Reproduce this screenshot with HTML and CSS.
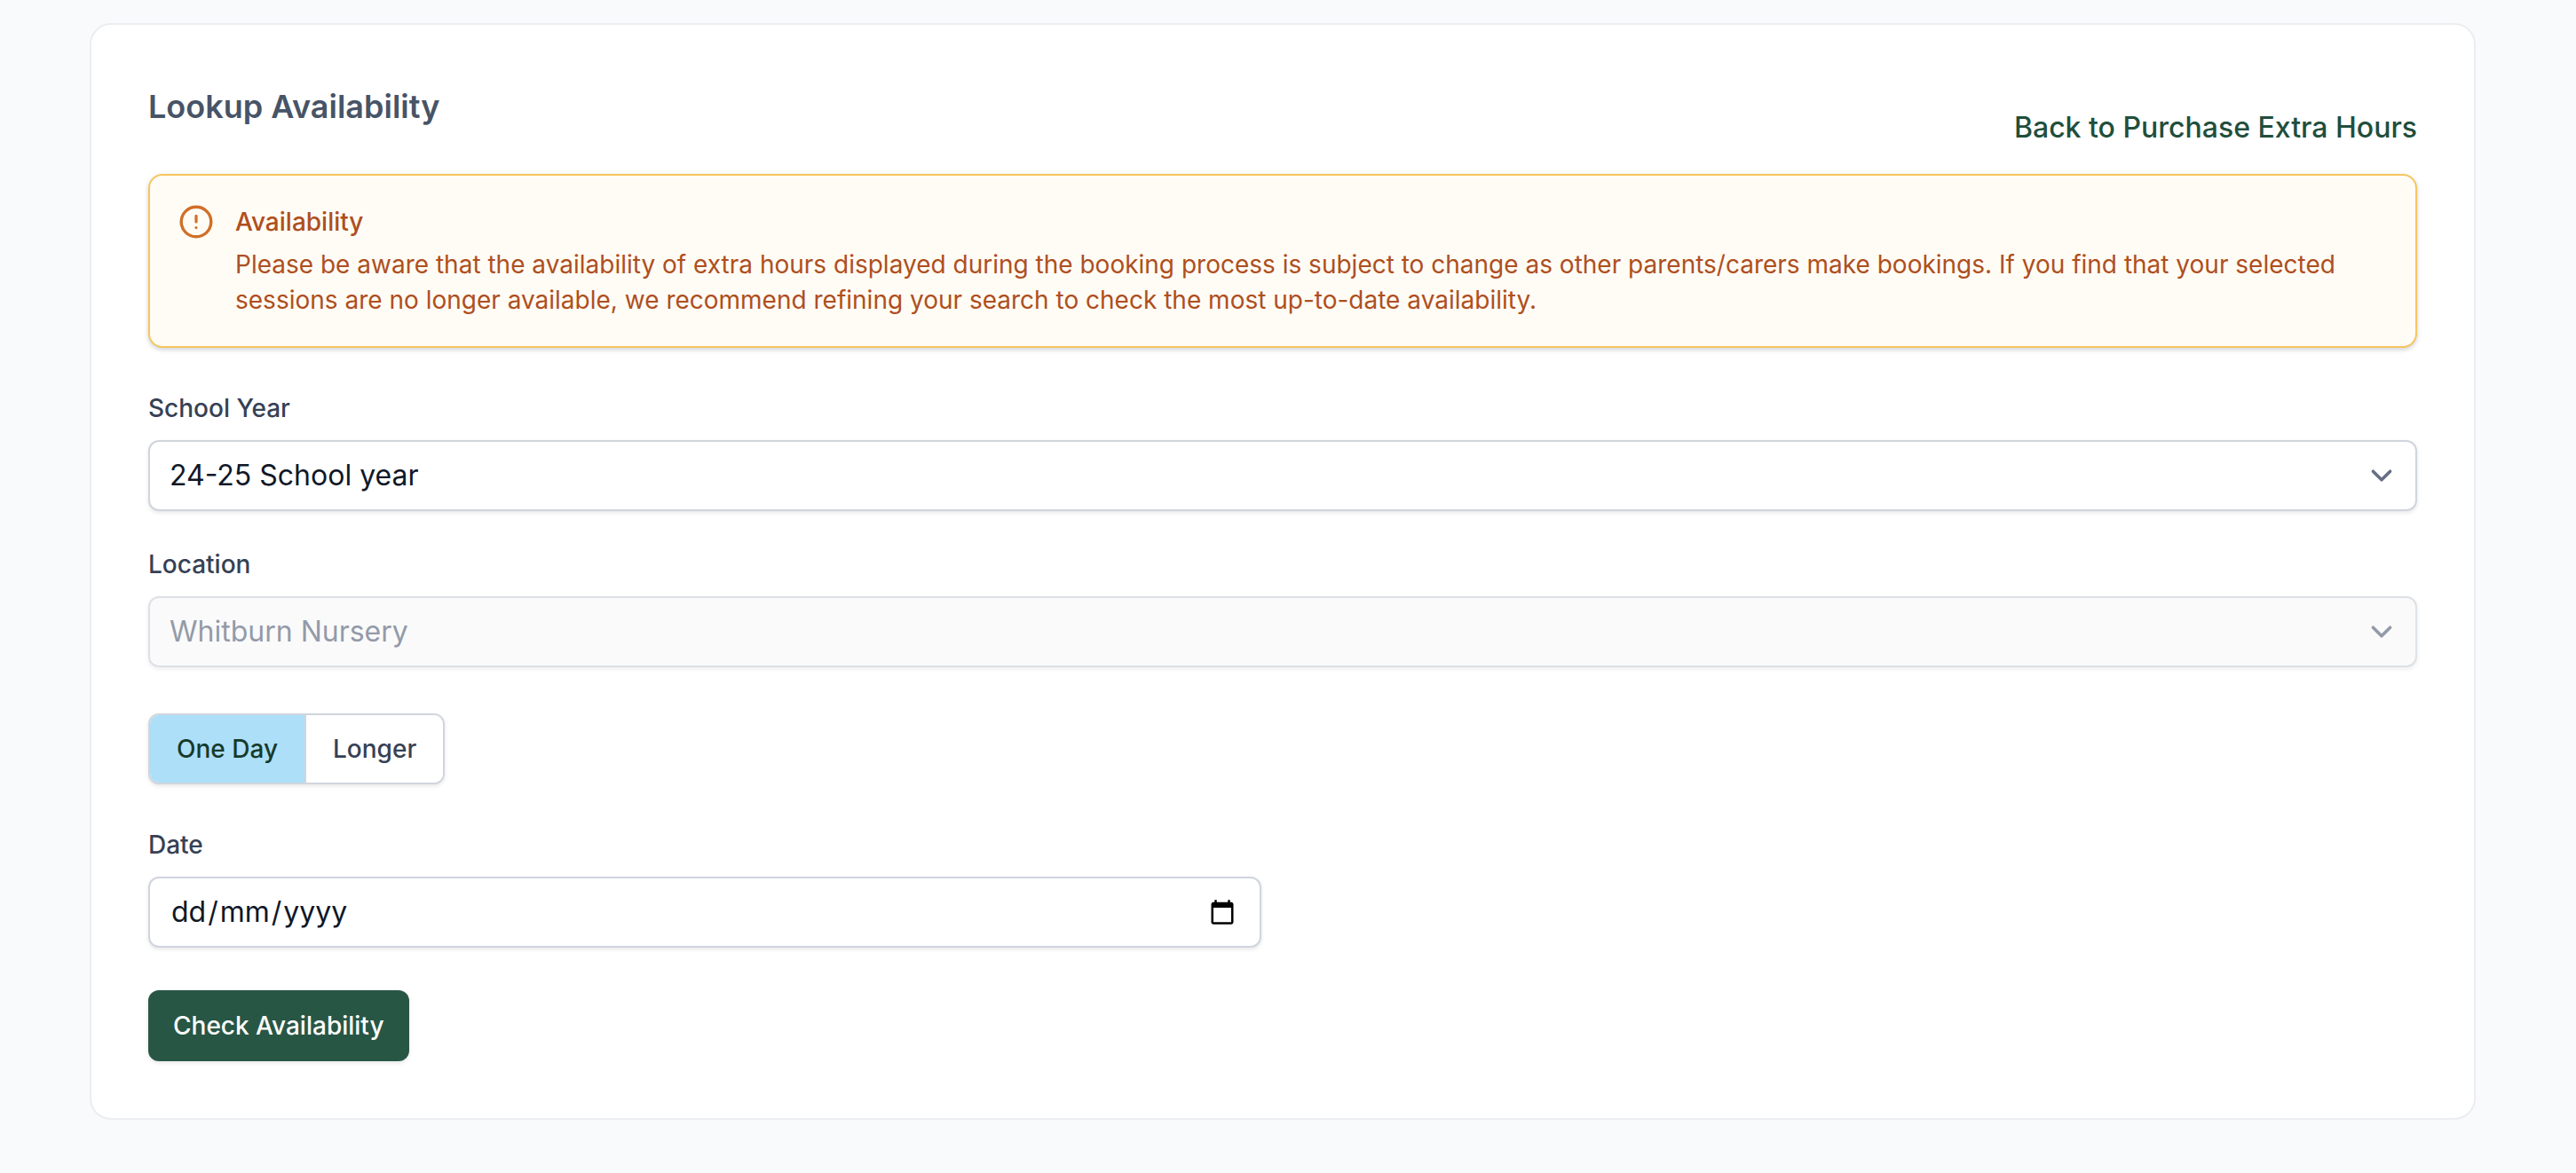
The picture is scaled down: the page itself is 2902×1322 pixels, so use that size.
FILE: index.html
```html
<!DOCTYPE html>
<html lang="en-GB">
<head>
<meta charset="utf-8">
<meta name="viewport" content="width=device-width, initial-scale=1">
<title>Lookup Availability</title>
<link rel="stylesheet" href="styles.css">
</head>
<body>
<main class="card">
  <header class="card-header">
    <h1 class="title">Lookup Availability</h1>
    <a class="back-link" href="#">Back to Purchase Extra Hours</a>
  </header>

  <section class="alert" role="note">
    <svg class="alert-icon" viewBox="0 0 40 40" fill="none" stroke="currentColor" stroke-linecap="round" aria-hidden="true">
      <circle cx="20" cy="20" r="16.8" stroke-width="3.4"/>
      <path d="M20 13.4v6.6M20 26.6v.01" stroke-width="3.2"/>
    </svg>
    <div class="alert-body">
      <h2 class="alert-title">Availability</h2>
      <p class="alert-text">Please be aware that the availability of extra hours displayed during the booking process is subject to change as other parents/carers make bookings. If you find that your selected sessions are no longer available, we recommend refining your search to check the most up-to-date availability.</p>
    </div>
  </section>

  <form class="form">
    <div class="field">
      <label class="label" for="year">School Year</label>
      <select class="control select" id="year"><option>24-25 School year</option></select>
    </div>
    <div class="field">
      <label class="label" for="location">Location</label>
      <select class="control select" id="location" disabled><option>Whitburn Nursery</option></select>
    </div>
    <div class="toggle" role="group" aria-label="Length of booking">
      <button class="toggle-option is-active" type="button" aria-pressed="true">One Day</button>
      <button class="toggle-option" type="button" aria-pressed="false">Longer</button>
    </div>
    <div class="date-grid">
      <div class="field">
        <label class="label" id="date-label" for="day">Date</label>
        <div class="control date-control" role="group" aria-labelledby="date-label">
          <div class="date-parts">
            <input class="date-input" id="day" type="text" inputmode="numeric" maxlength="2" placeholder="dd">
            <span>/</span>
            <input class="date-input" type="text" inputmode="numeric" maxlength="2" placeholder="mm" aria-label="Month">
            <span>/</span>
            <input class="date-input" type="text" inputmode="numeric" maxlength="4" placeholder="yyyy" aria-label="Year">
          </div>
          <button class="date-button" type="button" aria-label="Open calendar">
            <svg class="date-icon" viewBox="0 0 24 24" fill="currentColor" aria-hidden="true"><path d="M20 3h-1V1h-2v2H7V1H5v2H4c-1.100 0-2 .9-2 2v16c0 1.100.9 2 2 2h16c1.100 0 2-.9 2-2V5c0-1.100-.9-2-2-2zm0 18H4V8h16v13z"/></svg>
          </button>
        </div>
      </div>
    </div>
    <button class="submit" type="submit">Check Availability</button>
  </form>
</main>
</body>
</html>
```
FILE: styles.css
```css
*, *::before, *::after { box-sizing: border-box; }

body {
  margin: 0;
  padding: 26px 113px 60px 101px;
  background: #f9fafc;
  color: #101828;
  font-family: Inter, "Liberation Sans", sans-serif;
  font-size: 28px;
  line-height: 40px;
}

h1, h2, p { margin: 0; }
button, input, select { margin: 0; font: inherit; color: inherit; }

.card {
  padding: 64px;
  background: #fff;
  border: 2px solid #ebedf0;
  border-radius: 24px;
}

.card-header {
  display: flex;
  justify-content: space-between;
  min-height: 76px;
  margin-bottom: 28px;
}

.title {
  color: #475467;
  font-size: 36px;
  font-weight: 600;
  line-height: 56px;
}

.back-link {
  align-self: flex-end;
  color: #214e3c;
  font-size: 32px;
  font-weight: 500;
  line-height: 48px;
  text-decoration: none;
}

.alert {
  display: flex;
  gap: 24px;
  padding: 32px;
  margin-bottom: 48px;
  color: #ae4f20;
  background: #fffcf5;
  border: 2px solid #f6c65f;
  border-radius: 16px;
  box-shadow: 0 2px 4px rgba(16, 24, 40, .1), 0 2px 6px rgba(16, 24, 40, .1);
}

.alert-icon { flex: none; width: 40px; height: 40px; color: #d06f29; }
.alert-body { flex: 1; }
.alert-title { margin-bottom: 8px; font-size: 28px; font-weight: 500; line-height: 40px; }

.form { display: flex; flex-direction: column; align-items: flex-start; }

.field { width: 100%; margin-bottom: 40px; }

.label {
  display: block;
  margin-bottom: 16px;
  color: #364155;
  font-weight: 500;
}

.control {
  display: block;
  width: 100%;
  height: 80px;
  padding: 14px 22px;
  background-color: #fff;
  border: 2px solid #d0d5dd;
  border-radius: 12px;
  box-shadow: 0 2px 4px rgba(16, 24, 40, .1);
  font-size: 32px;
  line-height: 48px;
}

.select {
  appearance: none;
  background-image: url("data:image/svg+xml,%3Csvg xmlns='http://www.w3.org/2000/svg' fill='none' viewBox='0 0 20 20'%3E%3Cpath stroke='%23667085' stroke-linecap='round' stroke-linejoin='round' stroke-width='1.5' d='M6 8l4 4 4-4'/%3E%3C/svg%3E");
  background-repeat: no-repeat;
  background-position: right 14px center;
  background-size: 48px 48px;
}

.select:disabled {
  color: #667085;
  background-color: #f9f9f9;
  opacity: .7;
}

.toggle {
  display: flex;
  margin: 12px 0 48px;
  overflow: hidden;
  background: #fff;
  border: 2px solid #d0d5dd;
  border-radius: 12px;
  box-shadow: 0 2px 4px rgba(16, 24, 40, .1);
}

.toggle-option {
  height: 76px;
  padding: 0 30px;
  color: #364155;
  background: #fff;
  border: 0;
  font-weight: 500;
}

.toggle-option + .toggle-option { border-left: 2px solid #d0d5dd; }
.toggle-option.is-active { color: #163a2b; background: #aedff9; }

.date-grid {
  display: grid;
  grid-template-columns: 1fr 1fr;
  gap: 48px;
  width: 100%;
  margin-bottom: 8px;
}

.date-control {
  display: flex;
  align-items: center;
  justify-content: space-between;
  padding: 0 27px 0 24px;
}

.date-parts { display: flex; gap: 2px; }

.date-input {
  field-sizing: content;
  padding: 0;
  background: none;
  border: 0;
}

.date-input::placeholder { color: #101828; opacity: 1; }

.date-button {
  display: flex;
  padding: 0;
  color: #000;
  background: none;
  border: 0;
}

.date-icon { width: 30px; height: 30px; }

.submit {
  height: 80px;
  padding: 0 28px;
  color: #fff;
  background: #285645;
  border: 0;
  border-radius: 12px;
  box-shadow: 0 2px 4px rgba(16, 24, 40, .1);
  font-weight: 500;
}
```
